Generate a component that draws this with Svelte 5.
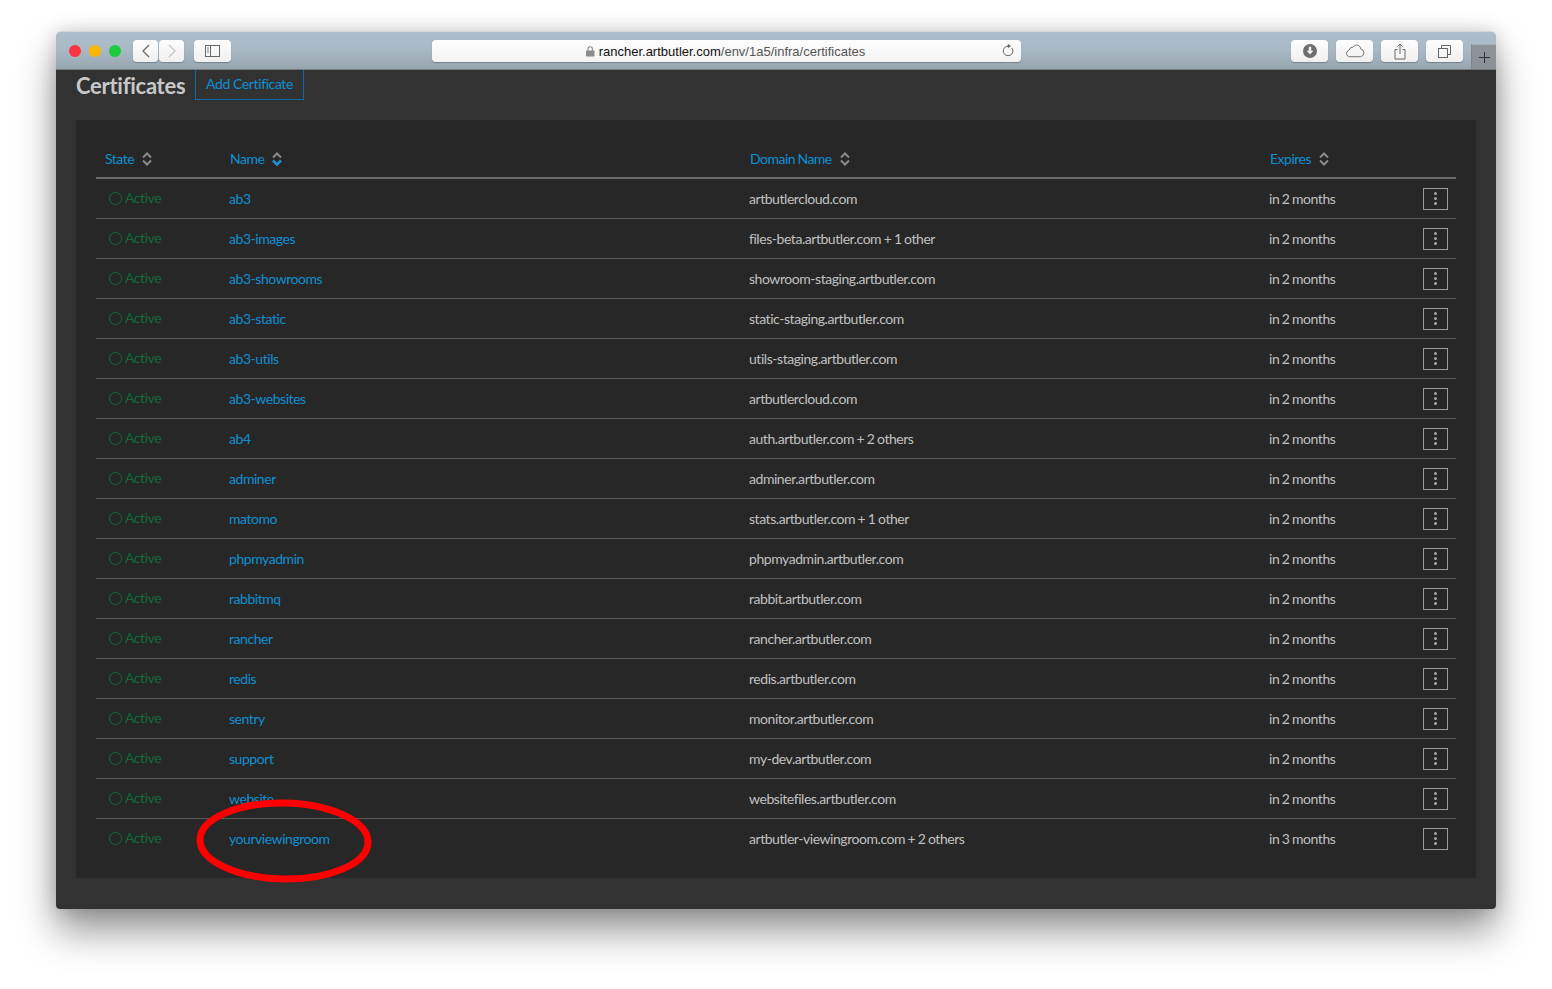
<script>
  const rows = [
    ['ab3', 'artbutlercloud.com', 'in 2 months'],
    ['ab3-images', 'files-beta.artbutler.com + 1 other', 'in 2 months'],
    ['ab3-showrooms', 'showroom-staging.artbutler.com', 'in 2 months'],
    ['ab3-static', 'static-staging.artbutler.com', 'in 2 months'],
    ['ab3-utils', 'utils-staging.artbutler.com', 'in 2 months'],
    ['ab3-websites', 'artbutlercloud.com', 'in 2 months'],
    ['ab4', 'auth.artbutler.com + 2 others', 'in 2 months'],
    ['adminer', 'adminer.artbutler.com', 'in 2 months'],
    ['matomo', 'stats.artbutler.com + 1 other', 'in 2 months'],
    ['phpmyadmin', 'phpmyadmin.artbutler.com', 'in 2 months'],
    ['rabbitmq', 'rabbit.artbutler.com', 'in 2 months'],
    ['rancher', 'rancher.artbutler.com', 'in 2 months'],
    ['redis', 'redis.artbutler.com', 'in 2 months'],
    ['sentry', 'monitor.artbutler.com', 'in 2 months'],
    ['support', 'my-dev.artbutler.com', 'in 2 months'],
    ['website', 'websitefiles.artbutler.com', 'in 2 months'],
    ['yourviewingroom', 'artbutler-viewingroom.com + 2 others', 'in 3 months']
  ];
  const heads = [
    { label: 'State', active: false },
    { label: 'Name', active: true },
    { label: 'Domain Name', active: false },
    { label: 'Expires', active: false }
  ];
</script>

<div class="stage">
  <div class="window">
    <header class="chrome">
      <div class="lights">
        <span class="light red"></span>
        <span class="light yellow"></span>
        <span class="light green"></span>
      </div>
      <div class="navpair">
        <button class="tb nav" aria-label="Back">
          <svg width="10" height="14" viewBox="0 0 10 14"><path d="M8 1 2 7l6 6" fill="none" stroke="#6b6b6b" stroke-width="1.3"/></svg>
        </button>
        <button class="tb nav" aria-label="Forward">
          <svg width="10" height="14" viewBox="0 0 10 14"><path d="m2 1 6 6-6 6" fill="none" stroke="#c4c4c4" stroke-width="1.3"/></svg>
        </button>
      </div>
      <button class="tb side" aria-label="Sidebar">
        <svg width="16" height="12" viewBox="0 0 16 12"><rect x=".5" y=".5" width="14" height="11" fill="none" stroke="#666"/><path d="M5.5 .5v11" stroke="#666"/><path d="M2 3h2M2 5h2M2 7h2" stroke="#888"/></svg>
      </button>
      <div class="urlbar">
        <span class="url">
          <svg width="9" height="11" viewBox="0 0 9 11"><rect x="0" y="4.5" width="8.5" height="6" rx=".8" fill="#8b8b8b"/><path d="M2 5V3a2.2 2.2 0 0 1 4.4 0v2" fill="none" stroke="#8b8b8b" stroke-width="1.1"/></svg>
          <b>rancher.artbutler.com</b><i>/env/1a5/infra/certificates</i>
        </span>
        <svg class="reload" width="12" height="14" viewBox="0 0 12 14"><path d="M9.9 5a4.8 4.8 0 1 1-3.7-1.9" fill="none" stroke="#666" stroke-width="1"/><path d="M5.8.8 9 3.1 5.8 5.2z" fill="#666"/></svg>
      </div>
      <div class="tools">
        <button class="tb tool" aria-label="Downloads">
          <svg width="16" height="16" viewBox="0 0 16 16"><circle cx="8" cy="8" r="7" fill="#6e6e6e"/><path d="M6.8 3.8h2.4v4h2.2L8 11.6 4.6 7.8h2.2z" fill="#f2f2f2"/></svg>
        </button>
        <button class="tb tool" aria-label="iCloud">
          <svg width="20" height="14" viewBox="0 0 20 14"><path d="M4.5 12.7a3.2 3.2 0 0 1-.6-6.3A4.6 4.6 0 0 1 8.300 3a4.200 4.200 0 0 1 3.200-2c2.300 0 4 1.700 4.200 4a3.900 3.900 0 0 1-.2 7.700z" fill="none" stroke="#777" stroke-width="1"/></svg>
        </button>
        <button class="tb tool" aria-label="Share">
          <svg width="12" height="17" viewBox="0 0 12 17"><path d="M3.500 6.500H1v9.500h10V6.500H8.500" fill="none" stroke="#666"/><path d="M6 11V1M3.500 3.500 6 1l2.500 2.500" fill="none" stroke="#666"/></svg>
        </button>
        <button class="tb tool" aria-label="Tabs">
          <svg width="13" height="13" viewBox="0 0 13 13"><rect x=".5" y="3.500" width="9" height="9" fill="none" stroke="#666"/><path d="M3.500 3.500v-3h9v9h-3" fill="none" stroke="#666"/></svg>
        </button>
      </div>
      <div class="newtab">
        <svg width="11" height="11" viewBox="0 0 11 11"><path d="M5.500 0v11M0 5.500h11" stroke="#333" stroke-width="1"/></svg>
      </div>
    </header>

    <main class="content">
      <div class="titlebar">
        <h1>Certificates</h1>
        <span class="addbtn">Add Certificate</span>
      </div>

      <section class="panel">
        <div class="row head">
          {#each heads as h}
            <div class="hcell">
              <span>{h.label}</span>
              <svg width="10" height="14" viewBox="0 0 10 14">
                <path d="M1 5.500 5 1.500 9 5.500" fill="none" stroke="#8a8a8a" stroke-width="2"/>
                <path d="M1 8.500 5 12.500 9 8.500" fill="none" stroke={h.active ? '#1d8fd0' : '#8a8a8a'} stroke-width={h.active ? 2.6 : 2}/>
              </svg>
            </div>
          {/each}
          <div></div>
        </div>
        {#each rows as r}
          <div class="row body">
            <div class="state"><span class="ring"></span>Active</div>
            <div class="name">{r[0]}</div>
            <div class="text">{r[1]}</div>
            <div class="text">{r[2]}</div>
            <div class="act">
              <span class="more"><i></i><i></i><i></i></span>
            </div>
          </div>
        {/each}
      </section>
    </main>

    <svg class="mark" width="180" height="90" viewBox="0 0 180 90">
      <ellipse cx="88" cy="44" rx="84" ry="38" transform="rotate(1 88 44)" fill="none" stroke="#fe0000" stroke-width="7"/>
    </svg>
  </div>
</div>

<style>
  :global(body) { margin: 0; background: #fff; }
  .stage {
    height: 989px;
    box-sizing: border-box;
    padding: 31px 56px 0;
    font-family: Lato, "Liberation Sans", sans-serif;
    overflow: hidden;
  }
  .window {
    position: relative;
    width: 1440px;
    height: 878px;
    border-radius: 5px 5px 4px 4px;
    box-shadow: 0 22px 38px rgba(0,0,0,.42), 0 0 18px rgba(0,0,0,.16);
    display: flex;
    flex-direction: column;
    overflow: visible;
  }
  .chrome {
    position: relative;
    flex: none;
    height: 39px;
    box-sizing: border-box;
    display: flex;
    align-items: flex-start;
    padding: 8px 0 0 13px;
    background: linear-gradient(#acbecb 0, #a9bac6 45%, #98a5ad 100%);
    border-top: 1px solid #d8d8d8;
    border-bottom: 1px solid #76797b;
    border-radius: 5px 5px 0 0;
  }
  .lights { display: flex; gap: 8px; margin-top: 5px; }
  .light { width: 12px; height: 12px; border-radius: 50%; }
  .red { background: #fc3340; }
  .yellow { background: #fdb700; }
  .green { background: #1ecb3c; }
  .tb {
    display: flex;
    align-items: center;
    justify-content: center;
    padding: 0;
    height: 22px;
    border: 0;
    border-radius: 4px;
    background: linear-gradient(#fdfdfd, #f0f0f0);
    box-shadow: 0 1px 1px rgba(70,80,90,.45);
  }
  .navpair { display: flex; margin-left: 12px; }
  .nav { width: 25px; margin-right: 1px; }
  .side { width: 37px; margin-left: 9px; }
  .urlbar {
    position: relative;
    width: 589px;
    height: 22px;
    margin-left: 201px;
    border-radius: 4px;
    background: linear-gradient(#fdfdfd, #f3f3f3);
    box-shadow: 0 1px 1px rgba(70,80,90,.45);
    display: flex;
    align-items: center;
    justify-content: center;
  }
  .url {
    display: flex;
    align-items: center;
    gap: 4px;
    margin-left: -2px;
    font: 13px "Liberation Sans", Arial, sans-serif;
    color: #555;
  }
  .url b { font-weight: 400; color: #111; margin-right: -4px; }
  .url i { font-style: normal; }
  .reload { position: absolute; right: 7px; top: 3px; }
  .tools { display: flex; gap: 8px; margin-left: 270px; }
  .tool { width: 37px; }
  .newtab {
    position: absolute;
    right: 0;
    top: 12px;
    width: 25px;
    height: 25px;
    box-sizing: border-box;
    display: flex;
    align-items: center;
    justify-content: center;
    background: #8c9298;
    border-left: 1px solid #7f8589;
    border-top: 1px solid #a6aeb3;
  }
  .content {
    flex: 1;
    box-sizing: border-box;
    background: #323232;
    padding: 0 20px;
    border-radius: 0 0 4px 4px;
  }
  .titlebar {
    height: 50px;
    display: flex;
    align-items: flex-start;
  }
  h1 {
    margin: 0;
    width: 119px;
    padding-top: 1px;
    font-size: 22px;
    line-height: 30px;
    font-weight: 700;
    letter-spacing: -.28px;
    color: #c8c8c8;
    white-space: nowrap;
  }
  .addbtn {
    box-sizing: border-box;
    width: 109px;
    height: 30px;
    border: 1px solid #0b6d9e;
    border-top: 0;
    color: #0f8fd2;
    font-size: 14px;
    letter-spacing: -.4px;
    line-height: 28px;
    text-align: center;
  }
  .panel {
    background: #272727;
    padding: 20px 20px 19px;
  }
  .row {
    display: grid;
    grid-template-columns: 133px 520px 520px 135px 52px;
    align-items: center;
  }
  .head {
    height: 39px;
    box-sizing: border-box;
    border-bottom: 2px solid #6a6a6a;
  }
  .hcell {
    display: flex;
    align-items: center;
    gap: 8px;
    padding-left: 1px;
    padding-bottom: 1px;
    font-size: 14px;
    letter-spacing: -.5px;
    word-spacing: -.8px;
    color: #0f8fd2;
  }
  .hcell svg { margin-top: 1px; }
  .hcell:first-child { padding-left: 9px; }
  .body {
    height: 40px;
    box-sizing: border-box;
    border-bottom: 1px solid #5a5a5a;
    font-size: 14px;
    letter-spacing: -.45px;
    word-spacing: -.6px;
  }
  .body:last-child { border-bottom-color: transparent; }
  .state {
    display: flex;
    align-items: center;
    padding-left: 13px;
    padding-bottom: 2px;
    gap: 3px;
    color: #0f6b3a;
  }
  .ring {
    box-sizing: border-box;
    width: 13px;
    height: 13px;
    margin-top: 2px;
    border: 1px solid #0f6b3a;
    border-radius: 50%;
  }
  .name { color: #0f8fd2; }
  .text { color: #c0c0c0; }
  .act { display: flex; justify-content: flex-end; padding: 1px 8px 0 0; }
  .more {
    box-sizing: border-box;
    width: 25px;
    height: 22px;
    padding-top: 3px;
    border: 1px solid #9a9a9a;
    display: flex;
    flex-direction: column;
    align-items: center;
    gap: 2px;
  }
  .more i { width: 3px; height: 3px; border-radius: 50%; background: #a8a8a8; }
  .mark { position: absolute; left: 140px; top: 766px; pointer-events: none; }
</style>
